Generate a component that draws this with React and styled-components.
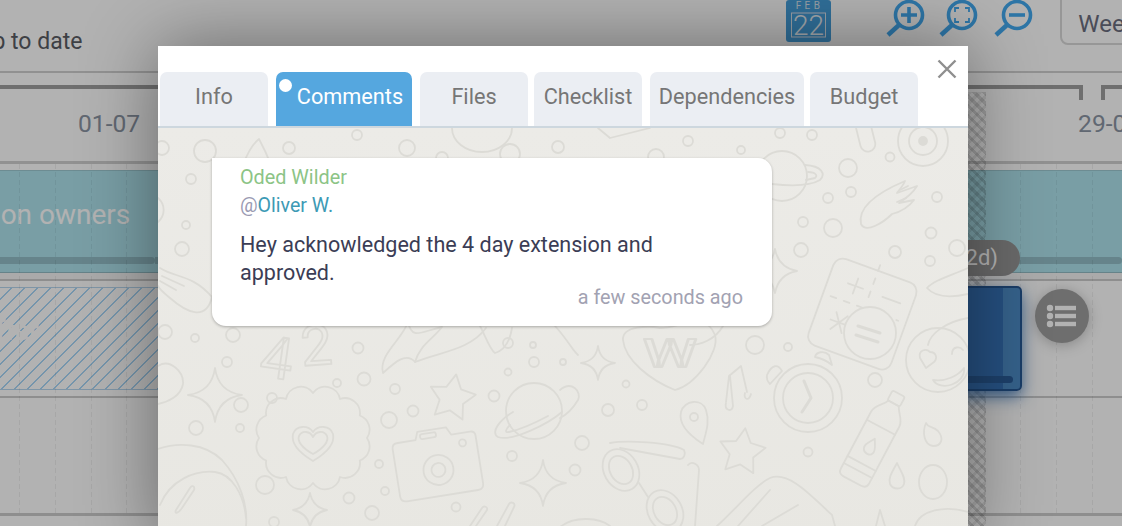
import React from "react";
import styled, { createGlobalStyle } from "styled-components";

const Global = createGlobalStyle`
  html, body { margin: 0; padding: 0; background: #fff; }
  #root { width: 1122px; height: 526px; overflow: hidden; }
  * { box-sizing: border-box; }
`;

const Page = styled.div`
  position: relative;
  width: 1122px;
  height: 526px;
  overflow: hidden;
  background: #fff;
  font-family: Roboto, "Liberation Sans", sans-serif;
`;

const Toolbar = styled.header`
  display: flex;
  align-items: flex-start;
  height: 73px;
  border-bottom: 2px solid #d0d0d0;
`;

const Status = styled.span`
  flex: none;
  margin: 27px 0 0 -22.5px;
  font-size: 23px;
  line-height: 30px;
  color: #5a5c63;
  white-space: nowrap;
`;

const ToolIcon = styled.svg`
  flex: none;
  margin-left: ${(p) => p.$ml}px;
`;

const ViewSelect = styled.div`
  flex: none;
  width: 120px;
  height: 56px;
  margin: -11px 0 0 25px;
  padding: 18px 0 0 16px;
  border: 2px solid #d8d8d8;
  border-radius: 8px;
  font-size: 24px;
  line-height: 30px;
  color: #6a6d7e;
`;

const Ruler = styled.div`
  height: 91px;
  border-bottom: 3px solid #d0d0d0;
`;

const Brackets = styled.div`
  display: flex;
  padding-top: 12px;
`;

const Bracket = styled.div`
  flex: none;
  height: 15px;
  width: ${(p) => p.$w}px;
  margin-left: ${(p) => p.$ml || 0}px;
  border-top: 4px solid #9f9f9f;
  ${(p) => (p.$side === "right" ? "border-right: 4px solid #9f9f9f;" : "border-left: 4px solid #9f9f9f;")}
`;

const Dates = styled.div`
  display: flex;
  gap: 938px;
  padding: 8px 0 0 78px;
  font-size: 24.6px;
  line-height: 32px;
  color: #8c95a4;
  white-space: nowrap;
`;

const Timeline = styled.div`
  position: relative;
  padding-top: 6px;
  &::after {
    content: "";
    position: absolute;
    inset: 0;
    background: repeating-linear-gradient(
      90deg,
      transparent 0 19px,
      rgba(0, 0, 0, 0.06) 19px 20px,
      transparent 20px 35.75px
    );
    -webkit-mask-image: repeating-linear-gradient(#000 0 5px, transparent 5px 8px);
    mask-image: repeating-linear-gradient(#000 0 5px, transparent 5px 8px);
  }
`;

const Weekend = styled.div`
  position: absolute;
  z-index: 1;
  left: 968px;
  top: -72px;
  width: 18px;
  height: 600px;
  background: repeating-linear-gradient(45deg, rgba(0, 0, 0, 0.13) 0 3px, transparent 3px 7px),
    repeating-linear-gradient(-45deg, rgba(0, 0, 0, 0.07) 0 3px, transparent 3px 7px);
`;

const TealBar = styled.div`
  position: relative;
  display: flex;
  flex-direction: column;
  height: 103px;
  padding-top: 27px;
  background: #aee3ed;
  border-top: 1px solid #9cc9d2;
  border-bottom: 1px solid #93bcc4;
`;

const BarLabel = styled.div`
  margin-left: -128px;
  font-size: 28px;
  line-height: 34px;
  font-weight: 400;
  color: #fff;
  white-space: nowrap;
`;

const StripeRow = styled.div`
  display: flex;
  margin-top: 25px;
  height: 7px;
`;

const Stripe = styled.div`
  flex: none;
  width: ${(p) => p.$w}px;
  border-radius: 0 4px 4px 0;
  background: rgba(0, 0, 0, 0.16);
`;

const DurationPill = styled.div`
  position: absolute;
  z-index: 2;
  left: 900px;
  top: 69px;
  width: 120px;
  height: 36px;
  padding-right: 22px;
  border-radius: 18px;
  background: #979797;
  color: #fff;
  font-size: 22px;
  line-height: 36px;
  text-align: right;
`;

const RowGap = styled.div`
  height: 14px;
  background: linear-gradient(#f4f4f4 0 6px, #ccc 6px 8px, #fff 8px);
`;

const TaskRow = styled.div`
  display: flex;
  align-items: flex-start;
  height: 111px;
  border-bottom: 2px solid #ccc;
`;

const HatchedBar = styled.div`
  flex: none;
  width: 930px;
  height: 103px;
  margin-left: -1px;
  padding-top: 26px;
  border: 1px solid #b6d6ee;
  background: repeating-linear-gradient(
    135deg,
    #fff 0 7.2px,
    #a8d6f6 7.7px 8.5px,
    #fff 9.19px
  );
  overflow: hidden;
`;

const HatchedLabel = styled.div`
  margin-left: -36px;
  font-size: 27px;
  line-height: 34px;
  font-weight: 500;
  color: #fff;
  white-space: nowrap;
`;

const BlueBar = styled.div`
  position: relative;
  z-index: 2;
  flex: none;
  width: 93px;
  height: 105px;
  margin-top: -1px;
  border: 2px solid #255692;
  border-radius: 5px;
  background: linear-gradient(90deg, #3572b7 0 72px, #4d8cc6 72px);
  box-shadow: 0 6px 16px rgba(53, 114, 183, 0.85);
`;

const BlueStripe = styled.div`
  position: absolute;
  left: 0;
  right: 7px;
  bottom: 6px;
  height: 7px;
  border-radius: 4px;
  background: #2a5c99;
`;

const RoundButton = styled.div`
  position: relative;
  z-index: 2;
  flex: none;
  display: flex;
  align-items: center;
  justify-content: center;
  width: 54px;
  height: 54px;
  margin: 2px 0 0 13px;
  border-radius: 50%;
  background: #9e9e9e;
  box-shadow: 0 2px 14px rgba(0, 0, 0, 0.25);
`;

const EmptyRow = styled.div`
  height: 118px;
  border-bottom: 3px solid #ccc;
`;

const Scrim = styled.div`
  position: absolute;
  z-index: 5;
  inset: 0;
  background: rgba(0, 0, 0, 0.3);
`;

const Modal = styled.section`
  position: absolute;
  z-index: 6;
  left: 158px;
  top: 46px;
  width: 810px;
  height: 500px;
  display: flex;
  flex-direction: column;
  background: #fff;
  box-shadow: 0 0 70px rgba(0, 0, 0, 0.42);
`;

const CloseButton = styled.div`
  position: absolute;
  right: 11px;
  top: 13px;
  width: 20px;
  height: 20px;
`;

const Tabs = styled.nav`
  display: flex;
  height: 82px;
  padding: 26px 0 0 2px;
  border-bottom: 2px solid #cdd7de;
  flex: none;
`;

const Tab = styled.div`
  position: relative;
  flex: none;
  width: ${(p) => p.$w}px;
  margin-left: ${(p) => p.$ml || 0}px;
  height: 54px;
  padding: 11px 0 0 ${(p) => (p.$active ? 12 : 0)}px;
  border-radius: 7px 7px 0 0;
  background: ${(p) => (p.$active ? "#55a7df" : "#ebeef3")};
  color: ${(p) => (p.$active ? "#fff" : "#767676")};
  font-size: 21.7px;
  line-height: 28px;
  text-align: center;
`;

const TabDot = styled.span`
  position: absolute;
  left: 3px;
  top: 7px;
  width: 13px;
  height: 13px;
  border-radius: 50%;
  background: #fff;
`;

const Conversation = styled.div`
  position: relative;
  flex: 1;
  padding: 30px 0 0 54px;
  background: linear-gradient(#ecebe7, #e8e7e2);
  overflow: hidden;
`;

const Wallpaper = styled.svg`
  position: absolute;
  left: 0;
  top: 0;
  fill: none;
  stroke: #dcdbd6;
  stroke-width: 1.8;
  stroke-linejoin: round;
  stroke-linecap: round;
`;

const Bubble = styled.article`
  position: relative;
  width: 560px;
  height: 168px;
  padding: 6px 29px 0 28px;
  background: #fff;
  border-radius: 0 14px 14px 14px;
  box-shadow: 0 1px 3px rgba(0, 0, 0, 0.28);
`;

const Author = styled.div`
  font-size: 19.8px;
  line-height: 28px;
  color: #8cc486;
`;

const Mention = styled.div`
  font-size: 19.6px;
  line-height: 28px;
  color: #9a9ab2;
`;

const MentionName = styled.span`
  color: #3d9ab5;
`;

const Body = styled.p`
  margin: 11px 0 0;
  max-width: 470px;
  font-size: 21.55px;
  line-height: 28px;
  color: #3b3d55;
`;

const Time = styled.div`
  margin-top: -1px;
  font-size: 19.8px;
  line-height: 24px;
  text-align: right;
  color: #a2a2b2;
`;

const DOTS = [
  [162, 148, 7], [205, 151, 11], [289, 148, 6], [357, 135, 5], [407, 148, 8], [442, 158, 6], [510, 154, 10],
  [558, 147, 6], [656, 157, 8], [688, 141, 5], [741, 150, 4], [780, 133, 5], [812, 135, 5], [848, 168, 9],
  [890, 157, 4.5], [828, 198, 5], [851, 192, 5], [937, 197, 5], [803, 222, 5], [833, 228, 9], [931, 233, 5.5],
  [957, 248, 8], [895, 252, 6], [930, 261, 5], [801, 250, 7], [191, 179, 5], [186, 225, 4], [182, 249, 7],
  [165, 332, 7], [195, 338, 4], [233, 335, 7], [227, 362, 5], [358, 348, 5.5], [508, 343, 5], [533, 345, 3],
  [534, 362, 5], [508, 372, 3.5], [337, 383, 4], [364, 379, 6.5], [395, 389, 5], [413, 411, 5.5], [389, 420, 8],
  [494, 396, 5.5], [272, 398, 5], [241, 405, 7], [196, 428, 7], [240, 428, 4], [379, 464, 4], [512, 456, 5],
  [265, 485, 9], [349, 498, 5.5], [385, 491, 4], [372, 513, 7], [456, 507, 4.5], [274, 522, 5], [755, 345, 9],
  [788, 347, 4], [626, 384, 3.5], [608, 410, 6], [642, 405, 5], [582, 443, 7], [575, 470, 5.5], [875, 380, 7],
  [808, 452, 4.5], [563, 362, 3],
];

const star4 = (x, y, s, k = 0.14) =>
  `M${x} ${y - s}Q${x + s * k} ${y - s * k} ${x + s} ${y}Q${x + s * k} ${y + s * k} ${x} ${y + s}Q${x - s * k} ${y + s * k} ${x - s} ${y}Q${x - s * k} ${y - s * k} ${x} ${y - s}Z`;

const star5 = (x, y, r, rot = 0) => {
  const pts = [];
  for (let i = 0; i < 10; i++) {
    const a = ((-90 + rot + i * 36) * Math.PI) / 180;
    const rad = i % 2 ? r * 0.52 : r;
    pts.push(`${(x + rad * Math.cos(a)).toFixed(1)},${(y + rad * Math.sin(a)).toFixed(1)}`);
  }
  return pts.join(" ");
};

const cloud = (cx, cy, r, n = 12) => {
  let d = "";
  for (let i = 0; i <= n; i++) {
    const a = (i / n) * Math.PI * 2;
    const x = (cx + r * 1.08 * Math.cos(a)).toFixed(1);
    const y = (cy + r * 0.9 * Math.sin(a)).toFixed(1);
    d += i === 0 ? `M${x} ${y}` : `A${r * 0.3} ${r * 0.3} 0 0 1 ${x} ${y}`;
  }
  return d + "Z";
};

function Doodles() {
  return (
    <Wallpaper width="810" height="400" viewBox="158 128 810 400">
      {DOTS.map(([x, y, r]) => (
        <circle key={`${x}-${y}`} cx={x} cy={y} r={r} />
      ))}
      {/* top area */}
      <path d="M243 165Q250 146 259 139Q266 152 271 165" />
      <path d="M452 128A30 24 0 0 0 512 128" />
      <path d="M598 128L610 138L650 128" />
      <rect x="858" y="118" width="15" height="34" rx="7.5" transform="rotate(-14 865 135)" />
      <circle cx="923" cy="141" r="25" />
      <circle cx="923" cy="141" r="14" />
      <circle cx="923" cy="141" r="4" fill="#dcdbd6" />
      {/* planet right of bubble */}
      <circle cx="782" cy="176" r="25" />
      <path d="M805 165C822 166 826 174 820 180C810 186 790 186 772 184" />
      <path d="M808 172C816 172 818 176 815 178L806 180" />
      {/* comet */}
      <path d="M861 224C858 210 872 195 905 181C903 186 899 190 897 193L917 186C913 193 905 199 899 203L914 200C908 208 900 212 892 214C884 222 866 234 861 224Z" />
      <path d="M900 190L908 186M897 202L906 198" />
      {/* star beside */}
      <path d={star4(775, 271, 22, 0.16)} />
      <path d="M968 268C950 276 934 280 927 288C935 297 950 298 968 294" />
      <path d="M968 318C945 322 930 334 928 345" />
      {/* calculator */}
      <g transform="rotate(20 862 315)">
        <rect x="818" y="268" width="88" height="92" rx="10" />
        <path d="M838 290H854M846 282V298M875 291H894M834 330H852M837 321L849 339M849 321L837 339" />
        <path d="M862 262V300M826 308H898" strokeDasharray="6 8" />
      </g>
      <circle cx="870" cy="333" r="26" fill="#eae9e5" />
      <path d="M858 326L880 333M856 335L878 342" strokeWidth="3" />
      {/* heart-eye face */}
      <circle cx="938" cy="360" r="32" />
      <path d="M920 358C918 350 926 348 930 352C936 352 938 358 934 362L926 368Z" />
      <path d="M952 354C952 346 960 346 963 350" />
      <path d="M933 380C945 382 958 376 964 368C966 384 940 392 933 380Z" />
      {/* hand */}
      <path d="M160 268C175 278 192 274 212 297C206 322 186 312 170 298C165 294 160 290 158 286" />
      <path d="M162 276L184 286M160 281L176 290" />
      <path d="M158 198C166 205 165 216 158 222" />
      {/* blob left */}
      <path d="M158 366C170 358 184 372 183 384C181 396 168 402 158 404" />
      <path d={star4(215, 395, 27, 0.12)} />
      {/* helmet */}
      <path d="M158 449C178 442 205 443 222 460C240 480 248 505 246 526" />
      <path d="M160 505C170 480 195 470 215 472C232 474 244 495 246 518" />
      <path d="M176 510L190 488C193 484 195 487 194 490L182 508C178 514 174 514 176 510Z" />
      {/* 42 */}
      <text x="258" y="376" fontFamily="Roboto, sans-serif" fontSize="58" transform="rotate(8 260 376)">4</text>
      <text x="302" y="366" fontFamily="Roboto, sans-serif" fontSize="56" transform="rotate(-4 302 366)">2</text>
      {/* rocket flames */}
      <path d="M383 373C378 355 402 340 408 322C412 340 420 332 442 327C432 340 420 345 415 362C406 352 395 362 383 373Z" />
      <path d="M415 362C440 352 470 350 486 328" />
      <path d="M480 326C485 335 490 350 495 353C505 350 510 340 512 328" />
      {/* heart cloud */}
      <path d={cloud(313, 438, 50)} />
      <path d="M313 461C298 452 291 443 293 434C296 425 308 425 313 432C318 425 330 425 333 434C335 443 328 452 313 461Z" />
      <path d="M313 454C302 448 297 441 299 436C302 430 310 431 313 437C316 431 324 430 327 436C329 441 324 448 313 454Z" />
      {/* star 5 */}
      <polygon points={star5(452, 398, 24, 10)} />
      {/* planet */}
      <circle cx="534" cy="411" r="28" />
      <path d="M513 412C500 420 490 432 498 437C512 442 548 424 562 412M510 425C506 429 504 433 509 432C518 430 535 423 548 416" />
      {/* camera */}
      <g transform="rotate(-9 438 467)">
        <path d="M402 437H420L423 429H452L456 437H475Q480 437 480 442V490Q480 496 474 496H402Q396 496 396 490V442Q396 437 402 437Z" />
        <rect x="425" y="432" width="16" height="5" rx="2" />
        <circle cx="438" cy="470" r="15" />
        <circle cx="438" cy="470" r="7" />
        <circle cx="466" cy="447" r="3.5" />
      </g>
      <path d={star4(310, 510, 17, 0.16)} />
      <path d={star4(543, 483, 23, 0.12)} />
      <path d="M470 526L482 508C484 505 488 507 487 510L476 526M497 526L509 504C511 501 516 503 514 507L505 526" />
      {/* small star + W heart */}
      <path d={star4(598, 363, 17, 0.12)} />
      <path d="M675 390C650 380 625 360 623 340C622 325 650 326 660 328C680 328 705 310 715 335C720 352 695 385 675 390Z" />
      <text x="643" y="367" fontFamily="Roboto, sans-serif" fontSize="38" fontWeight="500" textLength="54" lengthAdjust="spacingAndGlyphs">W</text>
      <path d="M723 326C715 340 700 345 690 345M555 326C568 340 572 350 578 355" />
      {/* music */}
      <path d="M726 402L729 376L741 366L747 392M726 403C724 410 732 413 733 406L730 376M751 394C749 402 743 399 745 393" />
      {/* clock */}
      <circle cx="808" cy="398" r="34" />
      <circle cx="808" cy="398" r="25" />
      <path d="M804 381L811 398L802 412" strokeWidth="3" />
      <path d="M767 375C772 364 778 364 782 371L770 384Q766 380 767 375ZM815 357C816 352 824 350 829 355L832 365C826 360 820 358 815 357Z" />
      {/* pin */}
      <path d="M703 444C692 437 678 425 681 412C684 400 702 398 706 410C710 422 706 432 703 444Z" />
      <circle cx="694" cy="417" r="4" />
      <polygon points={star5(742, 452, 24, 8)} />
      {/* bottle */}
      <g transform="rotate(28 873 440)">
        <path d="M858 416C858 408 866 404 868 398H880C882 404 890 408 890 416V480C890 484 888 486 884 486H864C860 486 858 484 858 480Z" />
        <rect x="867" y="387" width="14" height="11" rx="2" />
        <path d="M858 425H890M858 466H890M858 474H890" />
        <path d="M874 438C870 445 867 448 869 452C871 456 878 456 879 452C881 448 877 444 874 438Z" />
      </g>
      <path d="M926 423C922 432 924 445 933 446C942 446 944 438 938 431C933 426 928 428 926 423Z" />
      <path d="M897 463C892 472 888 478 890 484C893 490 902 490 904 484C906 478 901 472 897 463Z" />
      <ellipse cx="933" cy="482" rx="14" ry="17" />
      <path d="M915 526C920 510 945 505 968 512" />
      <path d="M880 510L876 526M880 510L885 526" />
      {/* glasses */}
      <path d="M610 443C625 440 670 442 684 450C686 454 684 459 680 459L620 448" />
      <ellipse cx="621" cy="470" rx="17" ry="22" transform="rotate(-30 621 470)" />
      <ellipse cx="621" cy="470" rx="11" ry="15" transform="rotate(-30 621 470)" />
      <ellipse cx="665" cy="511" rx="17" ry="22" transform="rotate(-30 665 511)" />
      <ellipse cx="665" cy="511" rx="11" ry="15" transform="rotate(-30 665 511)" />
      <path d="M639 483L648 497M688 465C692 460 699 465 699 470L695 526" />
      {/* suitcase */}
      <path d="M717 526C735 510 755 485 770 478C790 470 815 500 832 515L835 526" />
      <path d="M738 526L770 490M762 526L798 505" />
      <path d="M560 527C575 515 600 518 610 526" />
      <path d="M560 390C572 380 582 392 578 400C572 410 566 415 560 418" />
    </Wallpaper>
  );
}

const CalendarIcon = ({ ml }) => (
  <ToolIcon $ml={ml} width="45" height="42" viewBox="0 0 45 42">
    <rect width="45" height="42" rx="3" fill="#469fdc" />
    <text x="23.5" y="9" textAnchor="middle" fontFamily="Roboto, sans-serif" fontSize="10" letterSpacing="3.4" fill="#dde6ee">FEB</text>
    <rect x="5.5" y="13" width="34" height="24" fill="none" stroke="#dde6ee" strokeWidth="1" />
    <text x="22.5" y="35" textAnchor="middle" fontFamily="Roboto, sans-serif" fontSize="28" fontWeight="300" fill="#eaf1f6">22</text>
  </ToolIcon>
);

const ZoomIcon = ({ ml, kind }) => (
  <ToolIcon $ml={ml} width="42" height="42" viewBox="0 0 42 42" fill="none" stroke="#43a9f0">
    <circle cx="24" cy="15" r="13.5" strokeWidth="3.6" />
    <path d="M14 25L3 35" strokeWidth="4.5" />
    {kind === "plus" && <path d="M24 7V23M16 15H32" strokeWidth="3.6" />}
    {kind === "minus" && <path d="M16 15H32" strokeWidth="3.6" />}
    {kind === "fit" && (
      <path d="M17 12V8H21M27 8H31V12M31 18V22H27M21 22H17V18" strokeWidth="1.8" />
    )}
  </ToolIcon>
);

const ListIcon = () => (
  <svg width="32" height="24" viewBox="0 0 32 24" fill="#fff">
    <circle cx="4" cy="4" r="3.2" />
    <circle cx="4" cy="12" r="3.2" />
    <circle cx="4" cy="20" r="3.2" />
    <rect x="9" y="1.8" width="21" height="4.4" />
    <rect x="9" y="9.8" width="21" height="4.4" />
    <rect x="9" y="17.8" width="21" height="4.4" />
  </svg>
);

const TABS = [
  { label: "Info", w: 108 },
  { label: "Comments", w: 136, ml: 8, active: true },
  { label: "Files", w: 108, ml: 8 },
  { label: "Checklist", w: 108, ml: 6 },
  { label: "Dependencies", w: 154, ml: 8 },
  { label: "Budget", w: 108, ml: 6 },
];

export default function App() {
  return (
    <Page>
      <Global />
      <Toolbar>
        <Status>Up to date</Status>
        <CalendarIcon ml={704} />
        <ZoomIcon ml={54} kind="plus" />
        <ZoomIcon ml={11} kind="fit" />
        <ZoomIcon ml={13} kind="minus" />
        <ViewSelect>Week</ViewSelect>
      </Toolbar>
      <Ruler>
        <Brackets>
          <Bracket $w={1083} $side="right" />
          <Bracket $w={40} $ml={18} $side="left" />
        </Brackets>
        <Dates>
          <span>01-07</span>
          <span>29-07</span>
        </Dates>
      </Ruler>
      <Timeline>
        <Weekend />
        <TealBar>
          <BarLabel>Coordination owners</BarLabel>
          <StripeRow>
            <Stripe $w={155} />
            <Stripe $w={967} />
          </StripeRow>
          <DurationPill>(2d)</DurationPill>
        </TealBar>
        <RowGap />
        <TaskRow>
          <HatchedBar>
            <HatchedLabel>Buffer</HatchedLabel>
          </HatchedBar>
          <BlueBar>
            <BlueStripe />
          </BlueBar>
          <RoundButton>
            <ListIcon />
          </RoundButton>
        </TaskRow>
        <EmptyRow />
      </Timeline>
      <Scrim />
      <Modal>
        <CloseButton>
          <svg width="20" height="20" viewBox="0 0 20 20" stroke="#8f8f8f" strokeWidth="2.4" fill="none">
            <path d="M1.5 1.5L18.5 18.5M18.5 1.5L1.5 18.5" />
          </svg>
        </CloseButton>
        <Tabs>
          {TABS.map((t) => (
            <Tab key={t.label} $w={t.w} $ml={t.ml} $active={t.active}>
              {t.active && <TabDot />}
              {t.label}
            </Tab>
          ))}
        </Tabs>
        <Conversation>
          <Doodles />
          <Bubble>
            <Author>Oded Wilder</Author>
            <Mention>
              @<MentionName>Oliver W.</MentionName>
            </Mention>
            <Body>Hey acknowledged the 4 day extension and approved.</Body>
            <Time>a few seconds ago</Time>
          </Bubble>
        </Conversation>
      </Modal>
    </Page>
  );
}
